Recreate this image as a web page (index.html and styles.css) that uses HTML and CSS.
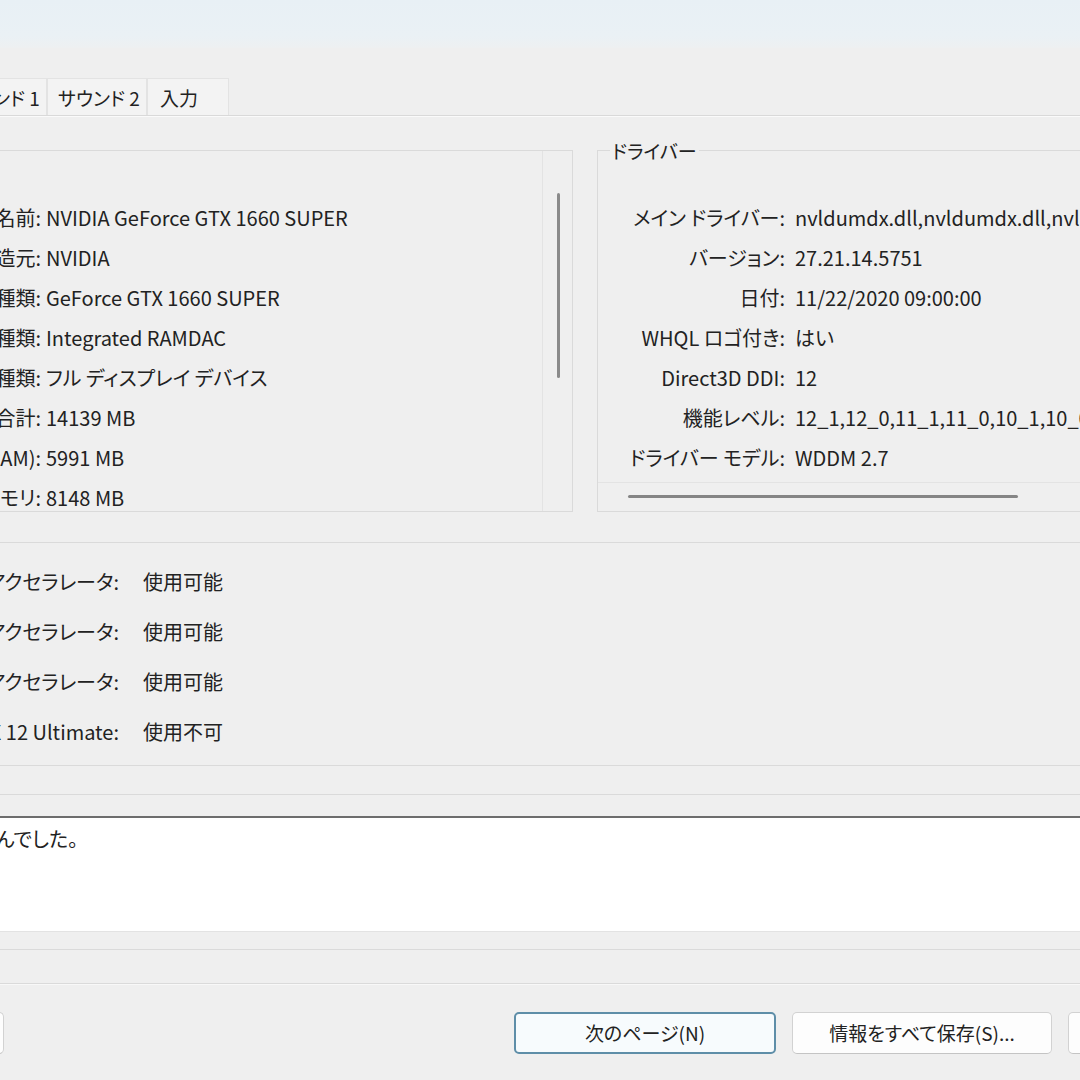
FILE: index.html
```html
<!DOCTYPE html>
<html lang="ja">

<head>
  <meta charset="UTF-8">
  <meta name="viewport" content="width=device-width, initial-scale=1.0">
  <title>DirectX 診断ツール</title>
  <link rel="stylesheet" href="styles.css">
</head>

<body>
  <div class="window">
    <div class="titlebar"></div>

    <div class="tabs">
      <div class="tab t-system">システム</div>
      <div class="tab t-display">ディスプレイ 1</div>
      <div class="tab t-sound1">サウンド 1</div>
      <div class="tab t-sound2">サウンド 2</div>
      <div class="tab t-input">入力</div>
    </div>

    <div class="page">
      <div class="panels">
        <div class="devbox">
          <div class="devlist">
            <div class="row"><span class="label">名前:</span><span class="val">NVIDIA GeForce GTX 1660 SUPER</span></div>
            <div class="row"><span class="label">製造元:</span><span class="val">NVIDIA</span></div>
            <div class="row"><span class="label">チップの種類:</span><span class="val">GeForce GTX 1660 SUPER</span></div>
            <div class="row"><span class="label">DAC の種類:</span><span class="val">Integrated RAMDAC</span></div>
            <div class="row"><span class="label">デバイスの種類:</span><span class="val">フル ディスプレイ デバイス</span></div>
            <div class="row"><span class="label">概算メモリ合計:</span><span class="val">14139 MB</span></div>
            <div class="row"><span class="label">表示メモリ (VRAM):</span><span class="val">5991 MB</span></div>
            <div class="row"><span class="label">共有メモリ:</span><span class="val">8148 MB</span></div>
          </div>
          <div class="vscroll">
            <div class="vthumb"></div>
          </div>
        </div>

        <div class="group driver">
          <div class="legend">ドライバー</div>
          <div class="driver-rows">
            <div class="row"><span class="label">メイン ドライバー:</span><span class="val">nvldumdx.dll,nvldumdx.dll,nvldumdx.dll,nvldumdx.dll</span></div>
            <div class="row"><span class="label">バージョン:</span><span class="val">27.21.14.5751</span></div>
            <div class="row"><span class="label">日付:</span><span class="val">11/22/2020 09:00:00</span></div>
            <div class="row"><span class="label">WHQL ロゴ付き:</span><span class="val">はい</span></div>
            <div class="row"><span class="label">Direct3D DDI:</span><span class="val">12</span></div>
            <div class="row"><span class="label">機能レベル:</span><span class="val">12_1,12_0,11_1,11_0,10_1,10_0,9_3,9_2,9_1</span></div>
            <div class="row"><span class="label">ドライバー モデル:</span><span class="val">WDDM 2.7</span></div>
          </div>
          <div class="hscroll">
            <div class="hthumb"></div>
          </div>
        </div>
      </div>

      <div class="group features">
        <div class="legend">DirectX の機能</div>
        <div class="row"><span class="label">DirectDraw アクセラレータ:</span><span class="val">使用可能</span></div>
        <div class="row"><span class="label">Direct3D アクセラレータ:</span><span class="val">使用可能</span></div>
        <div class="row"><span class="label">AGP テクスチャ アクセラレータ:</span><span class="val">使用可能</span></div>
        <div class="row"><span class="label">DirectX 12 Ultimate:</span><span class="val">使用不可</span></div>
      </div>

      <div class="group notes">
        <div class="legend">注意</div>
        <div class="notebox">
          <p>・問題は見つかりませんでした。</p>
        </div>
      </div>
    </div>

    <div class="separator"></div>

    <div class="buttons">
      <div class="btn btn-help">ヘルプ(H)</div>
      <div class="btn-right">
        <div class="btn btn-default">次のページ(N)</div>
        <div class="btn">情報をすべて保存(S)...</div>
        <div class="btn">終了(X)</div>
      </div>
    </div>
  </div>
</body>

</html>
```

FILE: styles.css
```css
* {
  margin: 0;
  padding: 0;
  box-sizing: border-box;
}

body {
  width: 1080px;
  height: 1080px;
  overflow: hidden;
  background-color: #efefef;
  font-family: "Noto Sans CJK JP", "Noto Sans", sans-serif;
  font-size: 20px;
  color: #222222;
  font-feature-settings: "palt";
}

/* the screenshot is a crop of the dialog, so the window starts left of the viewport */
.window {
  width: 1400px;
  margin-left: -240px;
}

.titlebar {
  height: 48px;
  background: linear-gradient(#e8f0f5, #eaf1f5 75%, #eef0f1);
}

.tabs {
  display: flex;
  height: 38px;
  margin-top: 30px;
  padding-left: 8px;
  border-bottom: 1px solid #d9d9d9;
  box-shadow: 0 1px 0 #fafafa;
}

.tab {
  flex: none;
  height: 37px;
  line-height: 37px;
  padding-left: 10px;
  font-size: 19px;
  background-color: #f3f3f3;
  border: 1px solid #e3e3e3;
  border-bottom: none;
  white-space: nowrap;
}

.t-system {
  width: 72px;
}

.t-display {
  width: 107px;
}

.t-sound1,
.t-sound2 {
  width: 100px;
}

.t-input {
  width: 82px;
  padding-left: 12px;
}

.page {
  padding: 34px 0 0 10px;
}

.row {
  display: flex;
  white-space: nowrap;
}

.label {
  flex: none;
  text-align: right;
}

.panels {
  display: flex;
  gap: 24px;
  height: 362px;
}

.devbox {
  display: flex;
  flex: none;
  width: 803px;
  border: 1px solid #dadada;
}

.devlist {
  flex: 1;
  overflow: hidden;
  padding-top: 47px;
  border-right: 1px solid #e3e3e3;
}

.devlist .row {
  line-height: 40px;
}

.devlist .label {
  width: 270px;
}

.devlist .val {
  padding-left: 5px;
}

.vscroll {
  width: 29px;
  padding: 42px 0 0 14px;
}

.vthumb {
  width: 3px;
  height: 185px;
  border-radius: 2px;
  background-color: #8a8a8a;
}

.group {
  border: 1px solid #dadada;
}

.legend {
  width: fit-content;
  margin: -14px 0 0 12px;
  padding: 0 2px;
  line-height: 28px;
  font-size: 19px;
  background-color: #efefef;
}

.driver {
  display: flex;
  flex-direction: column;
  flex: none;
  width: 560px;
}

.driver-rows {
  padding-top: 33px;
  overflow: hidden;
}

.driver .row {
  line-height: 40px;
}

.driver .label {
  width: 187px;
}

.driver .val {
  padding-left: 10px;
}

.hscroll {
  margin-top: auto;
  height: 29px;
  padding: 12px 0 0 30px;
  border-top: 1px solid #e3e3e3;
}

.hthumb {
  width: 390px;
  height: 3px;
  border-radius: 2px;
  background-color: #858585;
}

.features {
  margin-top: 30px;
  padding-bottom: 8px;
}

.features .row {
  line-height: 50px;
}

.features .label {
  width: 348px;
}

.features .val {
  padding-left: 24px;
}

.notes {
  margin-top: 28px;
  padding-bottom: 17px;
}

.notebox {
  height: 116px;
  margin-top: 7px;
  padding: 7px 0 0 43px;
  line-height: 28px;
  background-color: #ffffff;
  border-top: 2px solid #6d6d6d;
  border-bottom: 1px solid #e3e3e3;
}

.separator {
  margin-top: 33px;
  border-top: 1px solid #dadada;
  box-shadow: 0 1px 0 #f8f8f8;
}

.buttons {
  display: flex;
  margin-top: 28px;
}

.btn {
  flex: none;
  width: 260px;
  height: 42px;
  line-height: 40px;
  text-align: center;
  font-size: 19px;
  background-color: #fdfdfd;
  border: 1px solid #d2d2d2;
  border-bottom-color: #c4c4c4;
  border-radius: 5px;
}

.btn-help {
  width: 230px;
  margin-left: 14px;
}

.btn-right {
  display: flex;
  flex: none;
  gap: 16px;
  margin-left: 510px;
}

.btn-default {
  width: 262px;
  line-height: 38px;
  background-color: #f7fbfd;
  border: 2px solid #5e8ea8;
}
```
